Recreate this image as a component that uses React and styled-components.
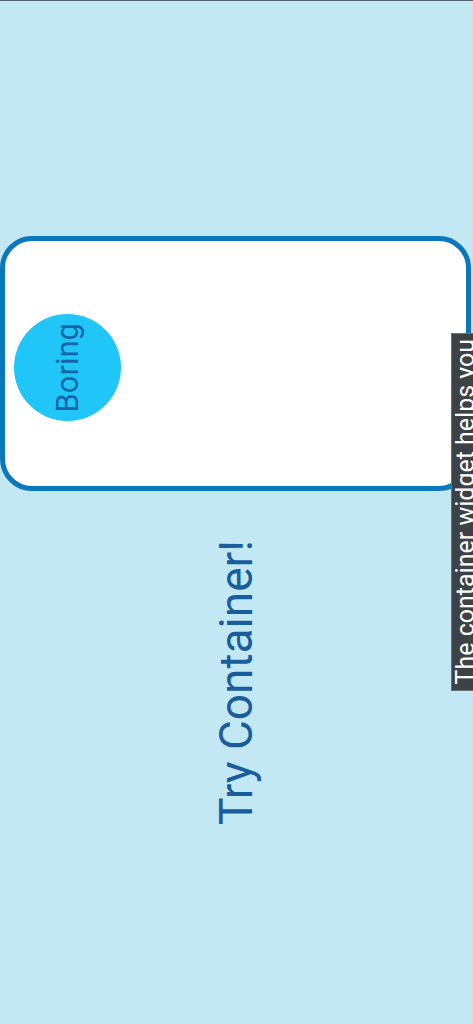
import styled, { createGlobalStyle } from "styled-components";

const GlobalStyle = createGlobalStyle`
  html, body {
    margin: 0;
    padding: 0;
    background: #c2e9f3;
    font-family: Roboto, "Open Sans", sans-serif;
  }
  * {
    box-sizing: border-box;
  }
`;

const Page = styled.div`
  position: relative;
  width: 473px;
  height: 1024px;
  overflow: hidden;
  border-top: 1px solid #56606a;
  display: flex;
  flex-direction: column;
  align-items: center;
  padding-top: 235px;
`;

const Card = styled.div`
  width: 471px;
  height: 255px;
  align-self: flex-start;
  background: #ffffff;
  border: 5px solid #0b78bd;
  border-radius: 32px;
  display: flex;
  align-items: center;
  padding: 8px 0 0 9px;
`;

const Circle = styled.div`
  width: 107px;
  height: 107px;
  border-radius: 50%;
  background: #21c6f9;
  display: flex;
  align-items: center;
  justify-content: center;
`;

const Vertical = styled.span`
  writing-mode: vertical-rl;
  transform: rotate(180deg);
  white-space: nowrap;
  color: ${(p) => p.color};
  font-size: ${(p) => p.size}px;
  line-height: 1;
`;

const Caption = styled.div`
  margin-top: 49px;
  display: flex;
  justify-content: center;
  width: 100%;
  padding-right: 2px;
`;

const Tooltip = styled.div`
  position: absolute;
  top: 332px;
  left: 451px;
  width: 32px;
  height: 358px;
  background: #3d4246;
  border: 1px solid #6b7075;
  display: flex;
  align-items: center;
  justify-content: flex-start;
  padding-left: 1px;
`;

export default function App() {
  return (
    <>
      <GlobalStyle />
      <Page>
        <Card>
          <Circle>
            <Vertical color="#1565a9" size={31}>Boring</Vertical>
          </Circle>
        </Card>
        <Caption>
          <Vertical color="#1a5d9d" size={46}>Try Container!</Vertical>
        </Caption>
        <Tooltip>
          <Vertical color="#ffffff" size={25}>The container widget helps you</Vertical>
        </Tooltip>
      </Page>
    </>
  );
}
